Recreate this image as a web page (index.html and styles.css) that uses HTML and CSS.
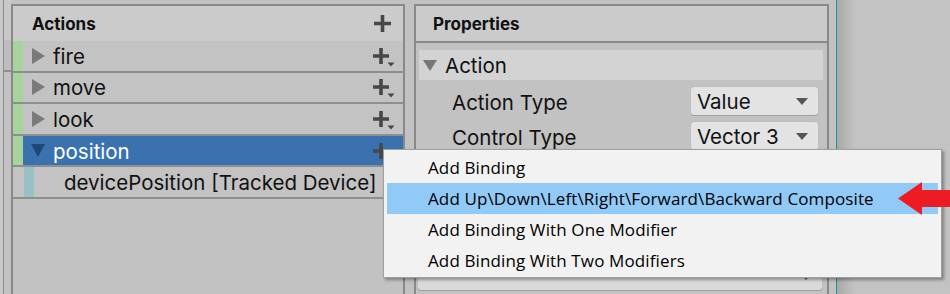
FILE: index.html
```html
<!DOCTYPE html>
<html lang="en">
<head>
  <meta charset="UTF-8" />
  <title>Input Actions</title>
  <link rel="stylesheet" href="styles.css">
</head>
<body>
  <!-- neighbour panel edge -->
  <div class="edge"></div>
  <div class="gutter">
    <div class="gutter-top"></div>
    <div class="gutter-row"></div>
  </div>

  <!-- Actions -->
  <section class="panel actions">
    <div class="panel-head">
      <span>Actions</span>
      <svg class="plus" width="19" height="19" viewBox="0 0 19 19"><path d="M9.5 1v17M1 9.5h17" stroke="#474747" stroke-width="3.6"/></svg>
    </div>
    <div class="row">
      <div class="tag"></div><div class="caret"></div><span class="name">fire</span>
      <svg class="plus" width="23" height="20" viewBox="0 0 23 20"><path d="M9 1v16M1 9h16" stroke="#474747" stroke-width="3.6"/><path d="M15.5 15.5h7l-3.5 4z" fill="#474747"/></svg>
    </div>
    <div class="row">
      <div class="tag"></div><div class="caret"></div><span class="name">move</span>
      <svg class="plus" width="23" height="20" viewBox="0 0 23 20"><path d="M9 1v16M1 9h16" stroke="#474747" stroke-width="3.6"/><path d="M15.5 15.5h7l-3.5 4z" fill="#474747"/></svg>
    </div>
    <div class="row">
      <div class="tag"></div><div class="caret"></div><span class="name">look</span>
      <svg class="plus" width="23" height="20" viewBox="0 0 23 20"><path d="M9 1v16M1 9h16" stroke="#474747" stroke-width="3.6"/><path d="M15.5 15.5h7l-3.5 4z" fill="#474747"/></svg>
    </div>
    <div class="row selected">
      <div class="tag"></div><div class="caret open"></div><span class="name">position</span>
      <svg class="plus" width="23" height="20" viewBox="0 0 23 20"><path d="M9 1v16M1 9h16" stroke="#474747" stroke-width="3.6"/><path d="M15.5 15.5h7l-3.5 4z" fill="#474747"/></svg>
    </div>
    <div class="row binding">
      <div class="tag"></div><span class="name">devicePosition [Tracked Device]</span>
    </div>
  </section>

  <!-- Properties -->
  <section class="panel props">
    <div class="panel-head props-head">
      <span>Properties</span>
    </div>
    <div class="props-body">
      <div class="foldout">
        <div class="caret open"></div><span>Action</span>
      </div>
      <div class="field">
        <span class="label">Action Type</span>
        <div class="dropdown"><span>Value</span><i class="arrow"></i></div>
      </div>
      <div class="field">
        <span class="label">Control Type</span>
        <div class="dropdown"><span>Vector 3</span><i class="arrow"></i></div>
      </div>
      <div class="dropdown wide"><span></span><i class="arrow"></i></div>
    </div>
  </section>

  <div class="spacer"></div>
  <div class="dock"></div>

  <!-- context menu -->
  <ul class="menu">
    <li>Add Binding</li>
    <li class="hover">Add Up\Down\Left\Right\Forward\Backward Composite</li>
    <li>Add Binding With One Modifier</li>
    <li>Add Binding With Two Modifiers</li>
  </ul>

  <svg class="pointer" width="52" height="34" viewBox="0 0 52 34">
    <path d="M0 16.5L24 0V8H52V25H24V33z" fill="#ed1c24"/>
  </svg>
</body>
</html>
```

FILE: styles.css
```css
* {
  box-sizing: border-box;
}

body {
  margin: 0;
  width: 950px;
  height: 294px;
  overflow: hidden;
  position: relative;
  display: flex;
  background: #c2c2c2;
  font-family: Inter, "Noto Sans", sans-serif;
  color: #111;
}

/* left neighbour */
.edge {
  width: 4px;
  background: #c9c9c9;
  border-right: 1px solid #8c8c8c;
}

.gutter {
  width: 7px;
}

.gutter-top {
  height: 40px;
  background: #c9c9c9;
}

.gutter-row {
  height: 32px;
  background: #bdbdbd;
  border-bottom: 2px solid #8e8e8e;
}

/* panels */
.panel {
  margin-top: 4px;
  border: 2px solid #898989;
  border-bottom: none;
  display: flex;
  flex-direction: column;
}

.actions {
  width: 394px;
}

.props {
  width: 415px;
  margin-left: 9px;
}

.panel-head {
  height: 35px;
  flex-shrink: 0;
  background: #cbcbcb;
  display: flex;
  align-items: center;
  justify-content: space-between;
  padding: 0 11px 0 19px;
  font-size: 17px;
  font-weight: 700;
}

.props-head {
  height: 37px;
  padding-left: 17px;
  border-bottom: 2px solid #898989;
}

.plus {
  display: block;
  flex-shrink: 0;
}

/* action rows */
.row {
  height: 31.6px;
  flex-shrink: 0;
  display: flex;
  align-items: center;
  border-bottom: 2px solid #8e8e8e;
  background: #c3c3c3;
  font-size: 20.5px;
}

.row .plus {
  margin-left: auto;
  margin-right: 8px;
  margin-top: 2px;
}

.tag {
  width: 10px;
  align-self: stretch;
  background: #a6d49b;
}

.caret {
  width: 0;
  height: 0;
  margin-left: 9px;
  border-left: 13px solid #7a7a7a;
  border-top: 8px solid transparent;
  border-bottom: 8px solid transparent;
}

.caret.open {
  margin-left: 8px;
  border-left: 7px solid transparent;
  border-right: 7px solid transparent;
  border-top: 13px solid #1f4876;
  border-bottom: none;
}

.name {
  margin-left: 8px;
  padding-top: 1px;
}

.row.selected {
  background: #3a72b0;
  color: #fff;
}

.row.binding .tag {
  margin-left: 11px;
  background: #97c1c4;
}

.row.binding .name {
  margin-left: 30px;
}

/* properties */
.props-body {
  flex: 1;
  display: flex;
  flex-direction: column;
  font-size: 20.5px;
}

.foldout {
  height: 30px;
  margin: 7px 4px 0 3px;
  background: #d3d3d3;
  display: flex;
  align-items: center;
}

.foldout .caret.open {
  margin-left: 4px;
  border-left-width: 7px;
  border-right-width: 7px;
  border-top: 11px solid #777;
}

.foldout span {
  margin-left: 8px;
  padding-top: 1px;
}

.field {
  height: 28px;
  margin-top: 7px;
  display: flex;
  align-items: center;
  padding-left: 36px;
}

.label {
  flex: 1;
  padding-top: 2px;
}

.dropdown {
  width: 127px;
  height: 28px;
  margin-right: 9px;
  display: flex;
  align-items: center;
  justify-content: space-between;
  padding: 1px 10px 0 6px;
  background: #e3e3e3;
  border-radius: 3px;
  box-shadow: 0 1px 0 #9f9f9f, 0 0 0 1px #bdbdbd;
}

.arrow {
  width: 0;
  height: 0;
  border-left: 6px solid transparent;
  border-right: 6px solid transparent;
  border-top: 7px solid #555;
}

.dropdown.wide {
  width: auto;
  margin: auto 5px 4px 2px;
  background: #dadada;
}

/* right dock */
.spacer {
  width: 7px;
}

.dock {
  flex: 1;
  border-left: 1px solid #12999a;
  background: linear-gradient(to right, #a9a9a9, #c3c3c3 18px);
}

/* popup menu */
.menu {
  position: absolute;
  left: 383px;
  top: 149px;
  width: 559px;
  margin: 0;
  padding: 2px 3px 1px;
  list-style: none;
  background: #f2f2f2;
  border: 1px solid #a0a0a0;
  box-shadow: 2px 2px 3px rgba(0, 0, 0, 0.35);
  font-family: "Open Sans", "Noto Sans", sans-serif;
  font-size: 17px;
  letter-spacing: 0.12px;
  color: #000;
}

.menu li {
  height: 31px;
  line-height: 31px;
  padding-left: 41px;
}

.menu li.hover {
  background: #91c9f7;
}

.pointer {
  position: absolute;
  left: 898px;
  top: 182px;
}
```
